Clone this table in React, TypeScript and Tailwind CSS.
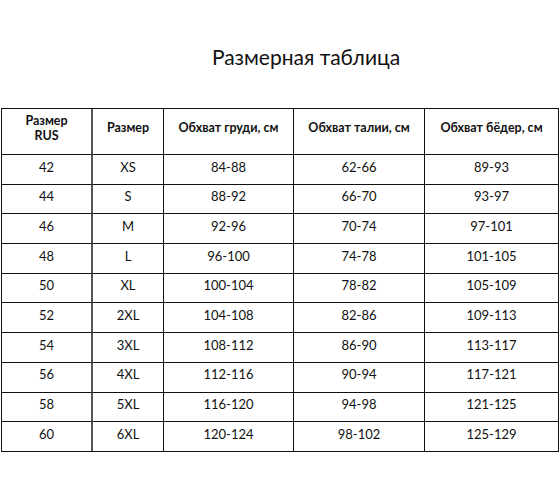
import React from "react";

const rows: [string, string, string, string, string][] = [
  ["42", "XS", "84-88", "62-66", "89-93"],
  ["44", "S", "88-92", "66-70", "93-97"],
  ["46", "M", "92-96", "70-74", "97-101"],
  ["48", "L", "96-100", "74-78", "101-105"],
  ["50", "XL", "100-104", "78-82", "105-109"],
  ["52", "2XL", "104-108", "82-86", "109-113"],
  ["54", "3XL", "108-112", "86-90", "113-117"],
  ["56", "4XL", "112-116", "90-94", "117-121"],
  ["58", "5XL", "116-120", "94-98", "121-125"],
  ["60", "6XL", "120-124", "98-102", "125-129"],
];

const colCls = [
  "border-r-2 border-r-[#555]",
  "border-r border-r-[#111]",
  "border-r border-r-[#111]",
  "border-r border-r-[#111]",
  "",
];

export default function App() {
  return (
    <div className="w-[560px] h-[504px] bg-white text-[#111] font-['Lato',_'Open_Sans',_sans-serif]">
      <div className="h-[108px] pt-[43px] flex justify-center">
        <div className="pl-[52px] text-[21px] leading-[28px]">Размерная таблица</div>
      </div>
      <div className="ml-[1px] w-[558px] border border-[#111] grid grid-cols-[91px_71px_130px_131px_133px]">
        {[
          ["Размер", "RUS"],
          ["Размер"],
          ["Обхват груди, см"],
          ["Обхват талии, см"],
          ["Обхват бёдер, см"],
        ].map((h, i) => (
          <div
            key={i}
            className={`h-[46px] pb-[8px] flex flex-col items-center justify-center border-b border-b-[#111] font-bold text-[12.5px] leading-[15px] text-center ${colCls[i]}`}
          >
            {h.map((t) => (
              <span key={t}>{t}</span>
            ))}
          </div>
        ))}
        {rows.map((r, ri) =>
          r.map((c, ci) => (
            <div
              key={`${ri}-${ci}`}
              className={`${ri === rows.length - 1 ? "h-[29px]" : "h-[29.7px] border-b border-b-[#111]"} pb-[4px] flex items-center justify-center text-[13px] ${colCls[ci]}`}
            >
              {c}
            </div>
          ))
        )}
      </div>
    </div>
  );
}
